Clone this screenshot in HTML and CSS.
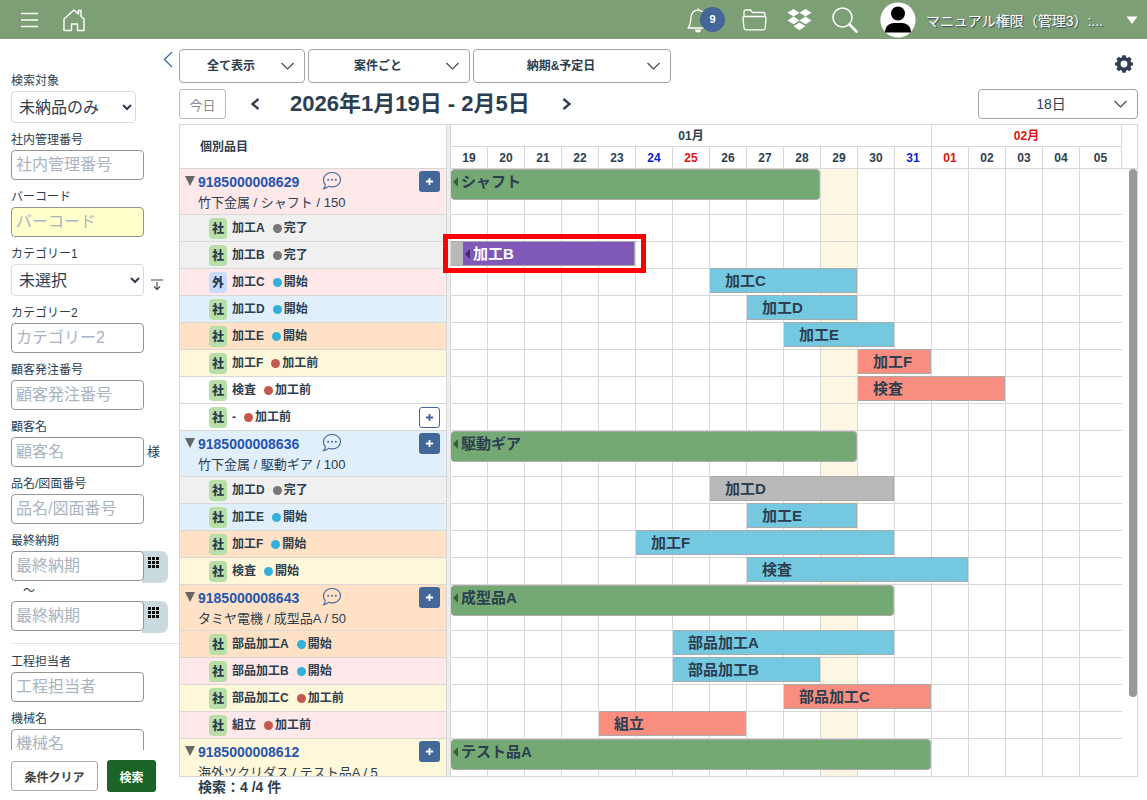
FILE: index.html
```html
<!DOCTYPE html>
<html lang="ja">
<head>
<meta charset="utf-8">
<title>個別品目スケジュール</title>
<link rel="stylesheet" href="styles.css">
</head>
<body>
<svg class="defs" aria-hidden="true">
  <symbol id="chat" viewBox="0 0 20 20"><path d="M10 1.500c5 0 8.500 3.100 8.500 7.200s-3.700 7.200-8.500 7.200c-1.300 0-2.500-.2-3.600-.6C5 16.700 3.300 17.600 1.600 17.700c1.100-1.100 1.700-2.400 1.700-3.900C2.100 12.500 1.500 10.700 1.500 8.700 1.500 4.600 5 1.500 10 1.500z" fill="none" stroke="currentColor" stroke-width="1.100"/><g fill="currentColor"><circle cx="6.200" cy="8.800" r="1"/><circle cx="10" cy="8.800" r="1"/><circle cx="13.800" cy="8.800" r="1"/></g></symbol>
  <symbol id="plus" viewBox="0 0 10 10"><path d="M5 1v8M1 5h8" stroke="currentColor" stroke-width="2"/></symbol>
  <symbol id="fold" viewBox="0 0 10 10"><path d="M0 0h10L5 10z" fill="#666"/></symbol>
  <symbol id="dots" viewBox="0 0 11 11"><path d="M0 0h3v3H0zM4 0h3v3H4zM8 0h3v3H8zM0 4h3v3H0zM4 4h3v3H4zM8 4h3v3H8zM0 8h3v3H0zM4 8h3v3H4zM8 8h3v3H8z" fill="#111"/></symbol>
</svg>

<header class="topbar">
  <button class="icon-btn" aria-label="メニュー"><svg width="20" height="16" viewBox="0 0 20 16"><path d="M1 1.500h17M1 8h17M1 14.500h17" stroke="#fff" stroke-width="1.300"/></svg></button>
  <a class="icon-btn home" href="#" aria-label="ホーム"><svg width="22" height="24" viewBox="0 0 22 24"><path d="M1 11 11 2l4.500 4V2.500h2.500v6L21 11v11.500h-6.500V16h-6v6.500H1z" fill="none" stroke="#fff" stroke-width="1.400" stroke-linejoin="round"/></svg></a>
  <span class="grow"></span>
  <button class="icon-btn bell" aria-label="通知"><svg width="24" height="26" viewBox="0 0 24 26"><path d="M11 1.200v2M1 21h20c-2.500-3-2.500-6-3-10.500C17.500 6 15 3.200 11 3.200S4.500 6 4 10.500C3.500 15 3.500 18 1 21z" fill="none" stroke="#fff" stroke-width="1.300" stroke-linejoin="round"/><path d="M8 22.500h6a3 3 0 0 1-6 0z" fill="#fff"/></svg><span class="count">9</span></button>
  <button class="icon-btn folder" aria-label="フォルダ"><svg width="25" height="22" viewBox="0 0 25 22"><path d="M2 7.500V2.500a1.500 1.500 0 0 1 1.500-1.500h5l2 2.500h11A1.500 1.500 0 0 1 23 5v2.500M3 7.500h19.500a1.500 1.500 0 0 1 1.500 1.600l-.8 9.900a2 2 0 0 1-2 1.800H4a2 2 0 0 1-2-1.800L1 9.100a1.500 1.500 0 0 1 1.500-1.600z" fill="none" stroke="#fff" stroke-width="1.300"/></svg></button>
  <button class="icon-btn box" aria-label="Dropbox"><svg width="25" height="22" viewBox="0 0 25 22"><path d="m6.500 0 6 3.800-6 3.800-6-3.800zM18.500 0l6 3.800-6 3.800-6-3.800zM6.500 7.600l6 3.800-6 3.800-6-3.800zM18.500 7.600l6 3.800-6 3.800-6-3.800zM12.500 13.500l6 3.800-6 3.900-6-3.900z" fill="#fff"/></svg></button>
  <button class="icon-btn search" aria-label="検索"><svg width="26" height="26" viewBox="0 0 26 26"><circle cx="10.500" cy="10.500" r="9.500" fill="none" stroke="#fff" stroke-width="1.500"/><path d="m17.500 17.500 7 7" stroke="#fff" stroke-width="2.800" stroke-linecap="round"/></svg></button>
  <button class="user"><svg width="36" height="36" viewBox="0 0 36 36"><circle cx="18" cy="18" r="17.600" fill="#fff"/><circle cx="18" cy="11.500" r="7"/><path d="M5 30.500c0-6 4-9.500 9-9.500h8c5 0 9 3.500 9 9.500z"/></svg><span class="user-name">マニュアル権限（管理3）:...</span><svg class="caret" width="12" height="8" viewBox="0 0 12 8"><path d="M.5.5h11L6 8z" fill="#fff"/></svg></button>
</header>

<div class="page">
<aside class="sidebar">
  <div class="side-head"><button class="icon-btn" aria-label="閉じる"><svg width="10" height="17" viewBox="0 0 10 17"><path d="M9 1 1.500 8.500 9 16" fill="none" stroke="#2f62b5" stroke-width="1.200"/></svg></button></div>
  <form class="filters">
    <label for="f1">検索対象</label>
    <select id="f1" class="narrow"><option>未納品のみ</option></select>
    <label for="f2">社内管理番号</label>
    <input id="f2" type="text" placeholder="社内管理番号">
    <label for="f3">バーコード</label>
    <input id="f3" class="barcode" type="text" placeholder="バーコード">
    <label for="f4">カテゴリー1</label>
    <div class="line"><select id="f4"><option>未選択</option></select><button type="button" class="icon-btn expand" aria-label="展開"><svg width="12" height="12" viewBox="0 0 12 12"><path d="M0 1h12M6 3v7.500M3 7.500l3 3 3-3" fill="none" stroke="#444" stroke-width="1.100"/></svg></button></div>
    <label for="f5">カテゴリー2</label>
    <input id="f5" type="text" placeholder="カテゴリー2">
    <label for="f6">顧客発注番号</label>
    <input id="f6" type="text" placeholder="顧客発注番号">
    <label for="f7">顧客名</label>
    <div class="line"><input id="f7" type="text" placeholder="顧客名"><span class="suffix">様</span></div>
    <label for="f8">品名/図面番号</label>
    <input id="f8" type="text" placeholder="品名/図面番号">
    <label for="f9">最終納期</label>
    <div class="date"><input id="f9" type="text" placeholder="最終納期"><button type="button" class="pick" aria-label="開始日を選択"><svg width="11" height="11"><use href="#dots"/></svg></button></div>
    <span class="tilde">〜</span>
    <div class="date"><input type="text" placeholder="最終納期" aria-label="最終納期（終了）"><button type="button" class="pick" aria-label="終了日を選択"><svg width="11" height="11"><use href="#dots"/></svg></button></div>
    <hr>
    <label for="f11">工程担当者</label>
    <input id="f11" type="text" placeholder="工程担当者">
    <label for="f12">機械名</label>
    <input id="f12" type="text" placeholder="機械名">
  </form>
  <div class="actions"><button class="clear">条件クリア</button><button class="submit">検索</button></div>
</aside>

<main class="content">
  <div class="toolbar">
    <select class="drop w1" aria-label="表示"><option>全て表示</option></select>
    <select class="drop w2" aria-label="単位"><option>案件ごと</option></select>
    <select class="drop w3" aria-label="日付種別"><option>納期&amp;予定日</option></select>
    <span class="grow"></span>
    <button class="icon-btn gear" aria-label="設定"><svg width="18" height="18" viewBox="-9 -9 18 18"><path fill="#2c3e50" fill-rule="evenodd" d="M-1.600-8.700h3.200l.5 2 1.400.6 1.900-1.100 2.200 2.200-1.100 1.900.6 1.400 2 .5v2.400l-2 .5-.6 1.400 1.100 1.900-2.200 2.200-1.900-1.100-1.400.6-.5 2h-3.200l-.5-2-1.400-.6-1.900 1.100-2.200-2.200 1.100-1.900-.6-1.400-2-.5v-2.400l2-.5.6-1.400-1.100-1.900 2.200-2.200 1.900 1.100 1.400-.6zM0-3.400a3.400 3.400 0 1 0 0 6.800 3.400 3.400 0 0 0 0-6.800z"/></svg></button>
  </div>
  <div class="datebar">
    <button class="today">今日</button>
    <button class="icon-btn prev" aria-label="前へ"><svg width="10" height="12" viewBox="0 0 10 12"><path d="M8.500 1 2.500 6l6 5" fill="none" stroke="#2c3e50" stroke-width="2.300"/></svg></button>
    <h1>2026年1月19日 - 2月5日</h1>
    <button class="icon-btn next" aria-label="次へ"><svg width="10" height="12" viewBox="0 0 10 12"><path d="m1.500 1 6 5-6 5" fill="none" stroke="#2c3e50" stroke-width="2.300"/></svg></button>
    <span class="grow"></span>
    <select class="drop days-select" aria-label="期間"><option>18日</option></select>
  </div>

  <section class="gantt">
    <div class="gantt-grid gantt-head">
      <div class="head-title">個別品目</div>
      <div class="divider"></div>
      <div class="scale cols">
        <span class="month m1">01月</span><span class="month m2 sun">02月</span>
        <span>19</span><span>20</span><span>21</span><span>22</span><span>23</span><span class="sat">24</span><span class="sun">25</span><span>26</span><span>27</span><span>28</span><span>29</span><span>30</span><span class="sat">31</span><span class="sun">01</span><span>02</span><span>03</span><span>04</span><span>05</span>
      </div>
      <div></div>
    </div>
    <div class="gantt-grid gantt-body">
      <div class="items">
        <div class="group pink"><svg class="fold"><use href="#fold"/></svg><div class="info"><a href="#">9185000008629</a><span>竹下金属 / シャフト / 150</span></div><svg class="chat"><use href="#chat"/></svg><button class="add" aria-label="追加"><svg><use href="#plus"/></svg></button></div>
        <div class="task gray"><b class="tag">社</b>加工A<i class="dot done"></i>完了</div>
        <div class="task gray"><b class="tag">社</b>加工B<i class="dot done"></i>完了</div>
        <div class="task pink"><b class="tag out">外</b>加工C<i class="dot start"></i>開始</div>
        <div class="task blue"><b class="tag">社</b>加工D<i class="dot start"></i>開始</div>
        <div class="task orange"><b class="tag">社</b>加工E<i class="dot start"></i>開始</div>
        <div class="task yellow"><b class="tag">社</b>加工F<i class="dot wait"></i>加工前</div>
        <div class="task"><b class="tag">社</b>検査<i class="dot wait"></i>加工前</div>
        <div class="task"><b class="tag">社</b>-<i class="dot wait"></i>加工前<button class="add hollow" aria-label="追加"><svg><use href="#plus"/></svg></button></div>
        <div class="group blue"><svg class="fold"><use href="#fold"/></svg><div class="info"><a href="#">9185000008636</a><span>竹下金属 / 駆動ギア / 100</span></div><svg class="chat"><use href="#chat"/></svg><button class="add" aria-label="追加"><svg><use href="#plus"/></svg></button></div>
        <div class="task gray"><b class="tag">社</b>加工D<i class="dot done"></i>完了</div>
        <div class="task blue"><b class="tag">社</b>加工E<i class="dot start"></i>開始</div>
        <div class="task orange"><b class="tag">社</b>加工F<i class="dot start"></i>開始</div>
        <div class="task yellow"><b class="tag">社</b>検査<i class="dot start"></i>開始</div>
        <div class="group orange"><svg class="fold"><use href="#fold"/></svg><div class="info"><a href="#">9185000008643</a><span>タミヤ電機 / 成型品A / 50</span></div><svg class="chat"><use href="#chat"/></svg><button class="add" aria-label="追加"><svg><use href="#plus"/></svg></button></div>
        <div class="task orange"><b class="tag">社</b>部品加工A<i class="dot start"></i>開始</div>
        <div class="task pink"><b class="tag">社</b>部品加工B<i class="dot start"></i>開始</div>
        <div class="task yellow"><b class="tag">社</b>部品加工C<i class="dot wait"></i>加工前</div>
        <div class="task pink"><b class="tag">社</b>組立<i class="dot wait"></i>加工前</div>
        <div class="group yellow"><svg class="fold"><use href="#fold"/></svg><div class="info"><a href="#">9185000008612</a><span>海外ツクリダス / テスト品A / 5</span></div><button class="add" aria-label="追加"><svg><use href="#plus"/></svg></button></div>
      </div>
      <div class="divider"></div>
      <div class="chart">
        <div class="lines cols"><i></i><i></i><i></i><i></i><i></i><i></i><i></i><i></i><i></i><i></i><i class="now"></i><i></i><i></i><i></i><i></i><i></i><i></i><i></i></div>
        <div class="rows">
          <div class="row tall cols"><div class="bar whole" style="grid-column:1/11">シャフト</div></div>
          <div class="row cols"></div>
          <div class="row cols"><div class="bar moving" style="grid-column:1/6"><span class="moved">加工B</span></div></div>
          <div class="row cols"><div class="bar start" style="grid-column:8/12">加工C</div></div>
          <div class="row cols"><div class="bar start" style="grid-column:9/12">加工D</div></div>
          <div class="row cols"><div class="bar start" style="grid-column:10/13">加工E</div></div>
          <div class="row cols"><div class="bar wait" style="grid-column:12/14">加工F</div></div>
          <div class="row cols"><div class="bar wait" style="grid-column:12/16">検査</div></div>
          <div class="row cols"></div>
          <div class="row tall cols"><div class="bar whole" style="grid-column:1/12">駆動ギア</div></div>
          <div class="row cols"><div class="bar done" style="grid-column:8/13">加工D</div></div>
          <div class="row cols"><div class="bar start" style="grid-column:9/12">加工E</div></div>
          <div class="row cols"><div class="bar start" style="grid-column:6/13">加工F</div></div>
          <div class="row cols"><div class="bar start" style="grid-column:9/15">検査</div></div>
          <div class="row tall cols"><div class="bar whole" style="grid-column:1/13">成型品A</div></div>
          <div class="row cols"><div class="bar start" style="grid-column:7/13">部品加工A</div></div>
          <div class="row cols"><div class="bar start" style="grid-column:7/11">部品加工B</div></div>
          <div class="row cols"><div class="bar wait" style="grid-column:10/14">部品加工C</div></div>
          <div class="row cols"><div class="bar wait" style="grid-column:5/9">組立</div></div>
          <div class="row tall cols"><div class="bar whole" style="grid-column:1/14">テスト品A</div></div>
        </div>
      </div>
      <div class="gutter"><div class="thumb"></div></div>
    </div>
  </section>
  <p class="result">検索：4 /4 件</p>
</main>
</div>
</body>
</html>
```
FILE: styles.css
```css
* { box-sizing: border-box; }
body {
  margin: 0;
  height: 100vh;
  display: flex;
  flex-direction: column;
  overflow: hidden;
  background: #fff;
  color: #2c3e50;
  font: 12px/18px "Liberation Sans", "Noto Sans CJK JP", sans-serif;
}
button, input, select { font-family: inherit; color: inherit; margin: 0; }
button { padding: 0; border: 0; background: none; }
svg { display: block; flex: none; }
.defs { position: absolute; width: 0; height: 0; }
.grow { flex: 1; }
.icon-btn { display: flex; align-items: center; flex: none; }

/* top bar */
.topbar {
  height: 39px;
  flex: none;
  display: flex;
  align-items: center;
  padding: 0 9px 0 20px;
  background: #7d9f75;
}
.home { margin-left: 23px; }
.bell { margin-right: 17px; }
.count {
  width: 25px;
  height: 25px;
  margin-left: -11px;
  border-radius: 50%;
  background: #426798;
  color: #fff;
  font-size: 11px;
  font-weight: bold;
  line-height: 25px;
  text-align: center;
}
.folder { margin-right: 20px; }
.box { margin-right: 20px; }
.search { margin-right: 22px; }
.user { display: flex; align-items: center; }
.user-name {
  margin: 0 23px 0 10px;
  color: #fff;
  font-size: 14px;
  text-shadow: 1px 1px 1px #3a4a5a;
}

.page { flex: 1; min-height: 0; display: flex; }

/* search conditions */
.sidebar { width: 179px; flex: none; display: flex; flex-direction: column; }
.side-head {
  height: 25px;
  flex: none;
  display: flex;
  align-items: flex-start;
  justify-content: flex-end;
  padding: 12px 6px 0 0;
}
.filters { flex: 1; min-height: 0; overflow: hidden; padding-left: 11px; }
.filters label { display: block; margin-top: 7px; line-height: 20px; }
.filters input, .filters select {
  display: block;
  width: 133px;
  height: 30px;
  padding: 0 4px;
  border: 1px solid #949494;
  border-radius: 4px;
  background: #fff;
  font-size: 16px;
}
.filters input::placeholder { color: #aab3c0; opacity: 1; }
.filters select { height: 32px; padding: 0 3px; border-color: #d5dbe3; }
.filters .narrow { width: 125px; }
.filters .barcode { background: #ffffcc; }
.line { display: flex; align-items: center; }
.expand { margin: 10px 0 0 7px; }
.suffix { margin-left: 3px; font-size: 13px; }
.date { display: flex; height: 30px; }
.date input { position: relative; }
.pick {
  display: flex;
  align-items: flex-start;
  width: 26px;
  height: 32px;
  margin-left: -2px;
  padding: 6px 0 0 6px;
  border-radius: 0 7px 7px 0;
  background: #cadade;
}
.tilde { display: block; padding-left: 12px; line-height: 20px; }
hr { margin: 12px 0 14px; border: 0; border-top: 1px solid #e4e4e4; }
hr + label { margin-top: 8px; }
.filters hr { margin-bottom: 8px; }
.actions { height: 50px; flex: none; display: flex; align-items: center; gap: 9px; padding: 2px 0 0 11px; }
.clear, .submit { height: 30px; border-radius: 3px; font-size: 12px; font-weight: bold; }
.clear { width: 87px; border: 1px solid #aaa; color: #444; }
.submit { width: 49px; height: 32px; background: #1b6428; color: #fff; }

/* controls above the chart */
.content { flex: 1; min-width: 0; display: flex; flex-direction: column; padding: 10px 9px 0 0; }
.toolbar { display: flex; align-items: center; gap: 3px; height: 34px; flex: none; }
.drop {
  height: 34px;
  padding: 0 22px 0 0;
  appearance: none;
  border: 1px solid #a5a5a5;
  border-radius: 4px;
  background: #fff url("data:image/svg+xml,%3Csvg xmlns='http://www.w3.org/2000/svg' width='13' height='8'%3E%3Cpath d='M.5 1 6.500 7 12.500 1' fill='none' stroke='%23444' stroke-width='1.100'/%3E%3C/svg%3E") no-repeat right 10px center;
  font-size: 12px;
  font-weight: bold;
  text-align: center;
  text-align-last: center;
}
.w1 { width: 126px; }
.w2 { width: 162px; }
.w3 { width: 198px; }
.gear { margin: 0 5px 4px 0; }
.datebar { display: flex; align-items: center; height: 30px; flex: none; margin: 6px 0 5px; }
.today { width: 47px; height: 30px; border: 1px solid #bbb; border-radius: 3px; color: #858b90; font-size: 13px; }
.prev { margin: 0 30px 0 24px; }
.next { margin-left: 32px; }
h1 { margin: 0; font-size: 22px; line-height: 30px; }
.datebar .days-select { width: 160px; height: 30px; padding-right: 14px; font-size: 14px; font-weight: normal; }

/* chart */
.gantt { flex: 1; min-height: 0; display: flex; flex-direction: column; border: 1px solid #d8d8d8; }
.gantt-grid { display: grid; grid-template-columns: 267px 4px 1fr 15px; }
.gantt-head { height: 43px; flex: none; font-weight: bold; }
.gantt-body { flex: 1; min-height: 0; overflow: hidden; grid-template-rows: 100%; }
.divider { background: #ededed; border-right: 1px solid #d8d8d8; }
.head-title { padding-left: 20px; border-right: 1px solid #d8d8d8; line-height: 45px; }
.cols { display: grid; grid-template-columns: repeat(17, 37fr) 42fr; }
.scale { grid-template-rows: 22px 21px; }
.scale span { border-right: 1px solid #d8d8d8; line-height: 23px; text-align: center; }
.scale .month { border-bottom: 1px solid #d8d8d8; }
.m1 { grid-column: 1 / 14; }
.m2 { grid-column: 14 / 19; }
.sat { color: #0a1fd0; }
.sun { color: #e01010; }

.group, .task { display: flex; border: 0 solid #d8d8d8; border-width: 1px 1px 0 0; }
.group { height: 46px; padding: 2px 6px 0 5px; }
.task { height: 27px; align-items: center; padding: 0 6px 0 29px; font-weight: bold; }
.pink { background: #ffe8ea; }
.gray { background: #f0f0f0; }
.blue { background: #e1effb; }
.orange { background: #ffe2c5; }
.yellow { background: #fff7d9; }
.fold { width: 10px; height: 10px; margin: 5px 3px 0 0; }
.info { display: flex; flex-direction: column; width: 124px; font-size: 13px; line-height: 19px; white-space: nowrap; }
.info a { color: #2455b0; font-size: 14px; font-weight: bold; line-height: 22px; text-decoration: none; }
.chat { width: 20px; height: 20px; color: #426798; }
.add {
  display: flex;
  align-items: center;
  justify-content: center;
  width: 21px;
  height: 21px;
  margin-left: auto;
  border-radius: 3px;
  background: #426798;
  color: #fff;
}
.add svg { width: 9px; height: 9px; }
.add.hollow { border: 1px solid #426798; background: #fff; color: #426798; }
.tag {
  width: 18px;
  height: 21px;
  margin-right: 5px;
  border-radius: 4px;
  background: #b9dfa9;
  line-height: 22px;
  text-align: center;
}
.tag.out { background: #c8dcfb; }
.dot { width: 9px; height: 9px; margin: 0 2px 0 8px; border-radius: 50%; }
.dot.done { background: #777; }
.dot.start { background: #31b0dc; }
.dot.wait { background: #c5594f; }

.chart { display: grid; grid-template: 100% / 100%; }
.lines, .rows { grid-area: 1 / 1; min-width: 0; }
.lines i { border-right: 1px solid #d8d8d8; }
.lines i:last-child { border-right: 0; }
.lines .now { background: #fcf6e3; }
.row { height: 27px; border-top: 1px solid #d8d8d8; }
.row.tall { height: 46px; }
.bar {
  height: 25px;
  margin: -1px 1px 0 0;
  padding-left: 15px;
  border: 1px solid #aaa;
  border-width: 1px 1px 1px 0;
  font-size: 15px;
  font-weight: bold;
  line-height: 23px;
  white-space: nowrap;
}
.bar.start { background: #74c9e1; }
.bar.wait { background: #f98d80; }
.bar.done { background: #b9b9b9; }
.bar.whole, .moved { display: flex; align-items: flex-start; }
.bar.whole { height: 31px; margin-top: 0; padding-left: 2px; border-radius: 4px; background: #74a974; line-height: 23px; }
.bar.whole::before, .moved::before {
  content: "";
  margin: 7px 3px 0 0;
  border: 5px solid transparent;
  border-left-width: 0;
  border-right-color: #3b5a3b;
}
.bar.moving { position: relative; padding-left: 12px; background: #b9b9b9; }
.moved { height: 23px; padding-left: 2px; background: #8058b8; color: #fff; }
.moved::before { border-right-color: #42276b; }
/* highlight frame round the moved bar */
.bar.moving::after {
  content: "";
  position: absolute;
  z-index: 2;
  inset: -8px -12px -8px -8px;
  border: 5px solid #fa0000;
}
.gutter { border-top: 1px solid #d8d8d8; display: flex; justify-content: flex-end; }
.thumb { width: 8px; height: 87%; border-radius: 4px; background: #999; }
.result { margin: 0; padding-left: 19px; flex: none; font-size: 14px; font-weight: bold; line-height: 21px; height: 23px; }
```
